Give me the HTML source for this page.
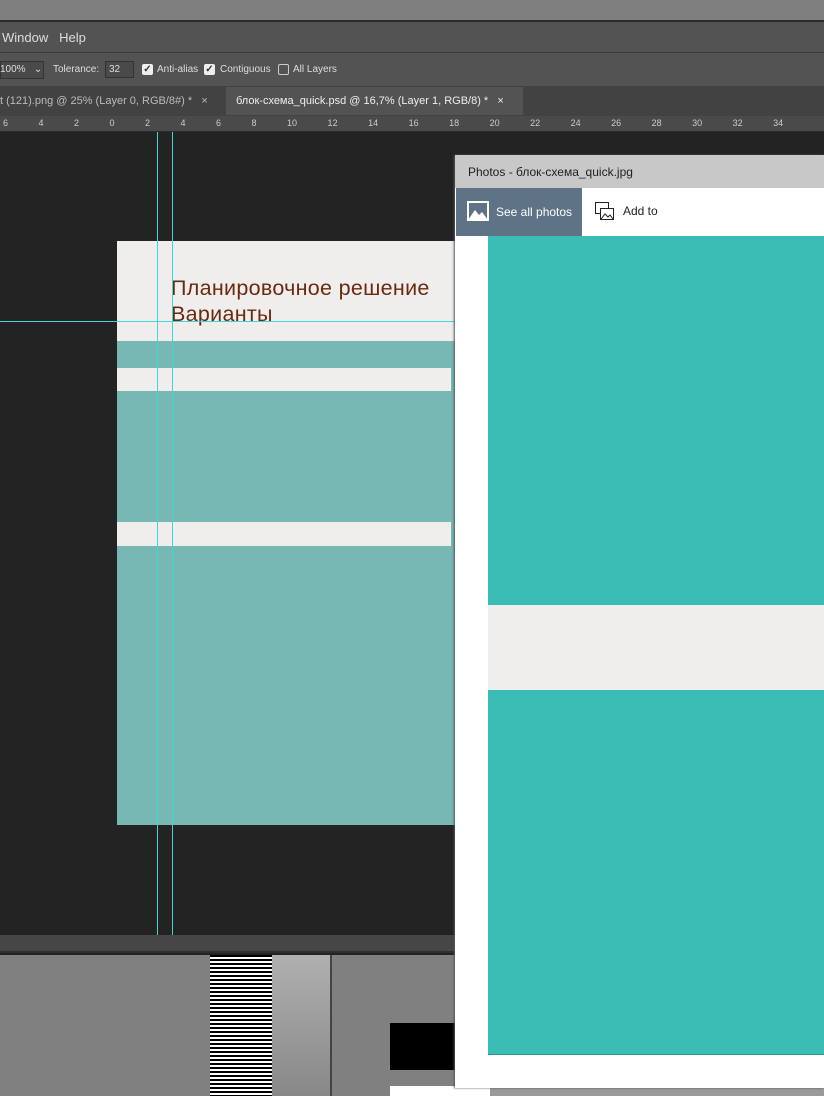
<!DOCTYPE html><html><head><meta charset="utf-8"><style>
*{margin:0;padding:0;box-sizing:border-box}
body{width:824px;height:1096px;position:relative;overflow:hidden;background:#232323;font-family:"Liberation Sans",sans-serif}
div{position:absolute}
.t{color:#ddd;font-size:12px;white-space:nowrap}
.cb{width:11px;height:11px;background:#eee;border-radius:2px;top:64px;color:#333;font-size:10px;line-height:11px;text-align:center;font-weight:bold}
</style></head><body>
<div style="left:0;top:0;width:824px;height:20px;background:#7f7f7f"></div>
<div style="left:0;top:20px;width:824px;height:2px;background:#2a2a2a"></div>
<div style="left:0;top:22px;width:824px;height:30px;background:#535353"></div>
<div class="t" style="left:2px;top:30px;font-size:13px">Window&nbsp;&nbsp;&nbsp;Help</div>
<div style="left:0;top:52px;width:824px;height:1px;background:#3a3a3a"></div>
<div style="left:0;top:53px;width:824px;height:33px;background:#535353"></div>
<div style="left:0;top:61px;width:44px;height:18px;border:1px solid #333;background:#4a4a4a"></div>
<div class="t" style="left:0;top:64px;font-size:10px">100%&nbsp;&nbsp;&nbsp;⌄</div>
<div class="t" style="left:53px;top:64px;font-size:10px">Tolerance:</div>
<div style="left:105px;top:61px;width:29px;height:17px;border:1px solid #333;background:#4a4a4a"></div>
<div class="t" style="left:109px;top:64px;font-size:10px">32</div>
<div class="cb" style="left:142px">✓</div><div class="t" style="left:157px;top:64px;font-size:10px">Anti-alias</div>
<div class="cb" style="left:204px">✓</div><div class="t" style="left:220px;top:64px;font-size:10px">Contiguous</div>
<div class="cb" style="left:278px;background:none;border:1px solid #ccc"></div><div class="t" style="left:293px;top:64px;font-size:10px">All Layers</div>
<div style="left:0;top:86px;width:824px;height:30px;background:#424242"></div>
<div class="t" style="left:0;top:95px;font-size:11px;color:#bbb">t (121).png @ 25% (Layer 0, RGB/8#) *&nbsp;&nbsp;&nbsp;×</div>
<div style="left:226px;top:87px;width:297px;height:28px;background:#535353"></div>
<div class="t" style="left:236px;top:95px;font-size:11px;color:#eee">блок-схема_quick.psd @ 16,7% (Layer 1, RGB/8) *&nbsp;&nbsp;&nbsp;×</div>
<div style="left:0;top:116px;width:824px;height:16px;background:#4a4a4a;border-bottom:1px solid #2a2a2a"></div>
<div class="t" style="left:3px;top:118px;font-size:9px;color:#ccc;word-spacing:28px">6 4 2 0 2 4 6 8 10 12 14 16 18 20 22 24 26 28 30 32 34</div>
<div style="left:0;top:935px;width:455px;height:18px;background:#464646;border-bottom:2px solid #2f2f2f"></div>
<div style="left:0;top:955px;width:455px;height:141px;background:#808080"></div>
<div style="left:455px;top:1088px;width:369px;height:8px;background:#9a9a9a"></div>
<div style="left:210px;top:955px;width:62px;height:141px;background:repeating-linear-gradient(#000 0 2px,#fff 2px 4px)"></div>
<div style="left:272px;top:955px;width:58px;height:141px;background:linear-gradient(#b0b0b0,#888)"></div>
<div style="left:330px;top:955px;width:2px;height:141px;background:#444"></div>
<div style="left:390px;top:1023px;width:70px;height:47px;background:#000"></div>
<div style="left:390px;top:1086px;width:100px;height:10px;background:#fff"></div>
<div style="left:117px;top:241px;width:338px;height:584px;background:#77b8b4"></div>
<div style="left:117px;top:241px;width:338px;height:100px;background:#efeeec"></div>
<div style="left:171px;top:275px;font-size:21.5px;color:#6b2a0e;line-height:26px;white-space:nowrap;letter-spacing:0.3px">Планировочное решение<br>Варианты</div>
<div style="left:117px;top:368px;width:334px;height:23px;background:#efeeec"></div>
<div style="left:117px;top:522px;width:334px;height:24px;background:#efeeec"></div>
<div style="left:157px;top:132px;width:1px;height:803px;background:#3fd6dc"></div>
<div style="left:172px;top:132px;width:1px;height:803px;background:#3fd6dc"></div>
<div style="left:0;top:321px;width:455px;height:1px;background:#3fd6dc"></div>
<div style="left:455px;top:155px;width:369px;height:933px;background:#fff;box-shadow:-1px 0 2px #555"></div>
<div style="left:455px;top:155px;width:369px;height:33px;background:#c8c8c8"></div>
<div style="left:468px;top:165px;font-size:12px;color:#222">Photos - блок-схема_quick.jpg</div>
<div style="left:456px;top:188px;width:126px;height:48px;background:#5f7386"></div>
<svg style="position:absolute;left:467px;top:201px" width="22" height="20"><rect x="1" y="1" width="20" height="18" fill="none" stroke="#fff" stroke-width="2"/><path d="M1 19 L8 9 L12 14 L15 11 L21 19Z" fill="#fff"/></svg>
<div style="left:496px;top:205px;font-size:12px;color:#fff">See all photos</div>
<svg style="position:absolute;left:595px;top:202px" width="20" height="19"><rect x="0.5" y="0.5" width="13" height="11" fill="none" stroke="#222"/><rect x="5.5" y="6.5" width="13" height="11" fill="#fff" stroke="#222"/><path d="M6 17 L10 12 L13 15 L15 13 L18 17" fill="none" stroke="#222"/></svg>
<div style="left:623px;top:204px;font-size:12px;color:#222">Add to</div>
<div style="left:488px;top:236px;width:336px;height:369px;background:#3bbcb4"></div>
<div style="left:488px;top:605px;width:336px;height:85px;background:#efeeec"></div>
<div style="left:488px;top:690px;width:336px;height:365px;background:#3bbcb4;border-bottom:1px solid #2a9a90"></div>
</body></html>
